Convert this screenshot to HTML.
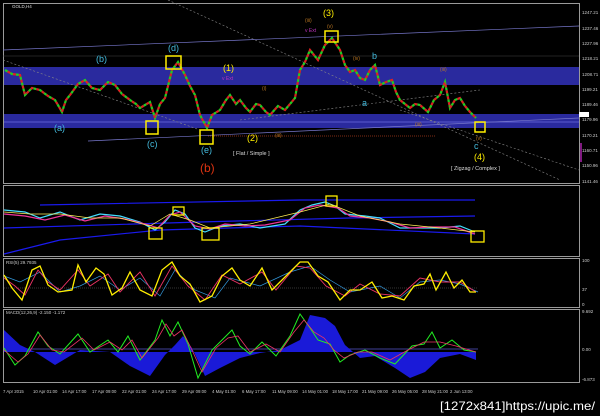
<!DOCTYPE html>
<html><head><meta charset="utf-8"><style>
html,body{margin:0;padding:0;background:#000;width:600px;height:416px;overflow:hidden}
svg{display:block}
text{font-family:"Liberation Sans",sans-serif}
</style></head><body>
<svg width="600" height="416" viewBox="0 0 600 416">
<rect width="600" height="416" fill="#000"/>
<g fill="none" stroke="#9a9a9a" stroke-width="1">
<rect x="3.5" y="3.5" width="576" height="180"/>
<rect x="3.5" y="185.5" width="576" height="71"/>
<rect x="3.5" y="258.5" width="576" height="49"/>
<rect x="3.5" y="309.5" width="576" height="73"/>
</g>
<rect x="4" y="67" width="575" height="18" fill="#2a2a9e"/>
<rect x="4" y="114" width="575" height="14" fill="#2a2a9e"/>
<line x1="4" y1="122" x2="579" y2="122" stroke="#8888ff" stroke-width="0.6"/>
<g stroke="#7777cc" stroke-width="0.7" fill="none">
<line x1="3" y1="50" x2="579" y2="26"/>
<line x1="88" y1="141" x2="579" y2="118"/>
</g>
<g stroke="#888" stroke-width="0.6" fill="none" stroke-dasharray="2,2">
<line x1="168" y1="0" x2="560" y2="180"/>
<line x1="3" y1="60" x2="200" y2="130"/>
<line x1="240" y1="120" x2="480" y2="90"/>
<line x1="400" y1="110" x2="579" y2="170"/>
</g>
<line x1="208" y1="136" x2="435" y2="136" stroke="#aa3a1a" stroke-width="0.8" stroke-dasharray="1,1"/>
<line x1="3" y1="56" x2="579" y2="56" stroke="#444" stroke-width="0.5"/>
<defs>
<polyline id="pr" fill="none" points="5,70 12,74 20,75 25,95 32,88 40,90 48,96 55,100 62,112 66,100 70,95 78,84 85,80 92,88 100,90 108,82 115,85 122,94 130,100 136,104 140,108 150,102 155,118 160,104 165,98 172,70 178,62 185,75 190,86 195,95 200,115 207,128 212,115 220,110 226,100 230,95 236,104 240,100 246,108 250,112 256,104 260,105 266,112 270,115 278,106 285,110 290,104 295,98 300,70 305,62 310,50 318,60 325,45 332,38 336,44 340,50 345,65 350,72 355,70 360,78 365,80 370,70 375,65 380,85 386,82 392,80 396,92 400,100 410,108 415,104 420,105 428,112 434,100 440,95 445,82 450,108 455,100 460,98 465,106 470,112 476,118"/>
</defs>
<use href="#pr" stroke="#22cc22" stroke-width="2.2" stroke-dasharray="3,3"/>
<use href="#pr" stroke="#dd2222" stroke-width="2.2" stroke-dasharray="3,3" stroke-dashoffset="3"/>
<g fill="none" stroke="#ffee00" stroke-width="1.5">
<rect x="166" y="56" width="15" height="13"/>
<rect x="146" y="121" width="12" height="13"/>
<rect x="200" y="130" width="13" height="14"/>
<rect x="325" y="31" width="13" height="11"/>
<rect x="475" y="122" width="10" height="10"/>
</g>
<g font-size="9">
<text x="54" y="131" fill="#44bbdd">(a)</text>
<text x="96" y="62" fill="#44bbdd">(b)</text>
<text x="147" y="147" fill="#44bbdd">(c)</text>
<text x="168" y="51" fill="#44bbdd">(d)</text>
<text x="201" y="153" fill="#44bbdd">(e)</text>
<text x="200" y="172" fill="#dd3311" font-size="12">(b)</text>
<text x="223" y="71" fill="#ffee00">(1)</text>
<text x="247" y="141" fill="#ffee00">(2)</text>
<text x="323" y="16" fill="#ffee00">(3)</text>
<text x="474" y="160" fill="#ffee00">(4)</text>
<text x="372" y="59" fill="#44bbdd">b</text>
<text x="362" y="106" fill="#44bbdd">a</text>
<text x="474" y="149" fill="#44bbdd">c</text>
</g>
<g font-size="5.5" fill="#ddd">
<text x="233" y="155">[ Flat / Simple ]</text>
<text x="451" y="170">[ Zigzag / Complex ]</text>
<text x="12" y="8" font-size="4.5">GOLD,H4</text>
</g>
<g font-size="5" fill="#bb7722">
<text x="305" y="22">(iii)</text><text x="327" y="28">(v)</text><text x="262" y="90">(i)</text><text x="275" y="137">(iii)</text><text x="353" y="60">(iv)</text><text x="440" y="71">(iii)</text><text x="415" y="126">(iii)</text><text x="476" y="140">(v)</text>
</g>
<g font-size="5" fill="#bb33bb"><text x="305" y="32">v Ext</text><text x="222" y="80">v Ext</text></g>
<g font-size="4.5" fill="#ccc">
<text x="582" y="14">1247.21</text><text x="582" y="30">1237.46</text><text x="582" y="45">1227.96</text><text x="582" y="60">1218.21</text><text x="582" y="76">1208.71</text><text x="582" y="91">1199.21</text><text x="582" y="106">1189.46</text><text x="582" y="121">1179.96</text><text x="582" y="137">1170.21</text><text x="582" y="152">1160.71</text><text x="582" y="167">1150.96</text><text x="582" y="183">1141.46</text>
<text x="582" y="262">100</text><text x="582" y="291">37</text><text x="582" y="306">0</text>
<text x="582" y="313">9.692</text><text x="582" y="351">0.00</text><text x="582" y="381">-6.873</text>
<text x="6" y="264">RSI(5) 29.7935</text><text x="6" y="314">MACD(12,26,9) -2.150 -1.172</text>
</g>
<rect x="579" y="112" width="10" height="5" fill="#fff"/>
<line x1="581" y1="143" x2="581" y2="162" stroke="#ff33ff" stroke-width="1"/>
<g fill="none" stroke-width="1.2">
<polyline stroke="#1a1aee" points="4,254 60,240 160,230 300,226 475,234"/>
<polyline stroke="#1a1aee" points="40,205 300,200 475,200"/>
<polyline stroke="#1a1aee" points="4,228 200,222 350,218 475,216"/>
<polyline stroke="#44ddff" points="4,210 25,212 40,218 60,212 80,220 100,214 120,216 140,222 155,230 165,222 175,210 185,214 195,228 205,232 220,226 240,224 260,228 285,224 300,210 312,205 325,202 335,206 345,214 365,216 380,218 400,228 420,228 440,228 460,226 475,232"/>
<polyline stroke="#ee3399" points="4,214 25,216 45,220 65,215 85,221 105,216 125,219 145,224 158,228 170,215 180,212 195,226 210,229 225,224 245,226 265,225 290,220 305,208 320,205 338,208 350,216 370,218 390,222 410,228 430,227 455,227 475,234"/>
<polyline stroke="#ffee55" stroke-width="0.7" points="4,212 30,214 60,214 90,218 120,218 150,226 170,214 190,220 210,228 250,224 300,212 330,204 360,216 400,224 440,228 475,232"/>
</g>
<g fill="none" stroke="#ffee00" stroke-width="1.3">
<rect x="149" y="228" width="13" height="11"/><rect x="173" y="207" width="11" height="8"/><rect x="202" y="228" width="17" height="12"/><rect x="326" y="196" width="11" height="10"/><rect x="471" y="231" width="13" height="11"/>
</g>
<line x1="4" y1="288" x2="478" y2="288" stroke="#666" stroke-width="0.5" stroke-dasharray="1,1"/>
<polyline fill="none" stroke="#3399dd" stroke-width="0.7" points="4,276 20,282 40,272 60,292 80,286 100,276 120,290 140,278 160,296 175,270 195,290 215,298 230,278 260,286 290,272 310,266 330,280 350,292 380,286 400,298 420,282 440,280 460,284 478,292"/>
<polyline fill="none" stroke="#ee3366" stroke-width="0.9" points="4,278 15,286 25,295 38,270 48,282 60,290 78,270 90,286 108,274 120,292 140,272 155,296 172,266 188,286 205,300 222,275 240,284 262,272 276,290 296,266 310,268 326,286 345,296 360,284 380,294 400,296 420,278 440,282 460,282 476,292"/>
<polyline fill="none" stroke="#ffee00" stroke-width="1.3" points="4,275 12,288 22,300 32,270 40,266 48,285 58,292 72,290 78,265 86,282 96,268 104,274 112,295 122,288 130,272 140,290 152,296 162,270 172,262 180,276 190,284 200,302 212,296 222,276 232,268 240,280 250,286 262,268 272,290 282,280 292,270 300,262 308,262 318,276 328,282 340,300 350,290 360,290 372,282 382,298 392,296 404,300 414,286 424,284 430,274 436,290 446,272 454,288 462,280 470,292 476,292"/>
<line x1="4" y1="349" x2="478" y2="349" stroke="#5555cc" stroke-width="0.8"/>
<path fill="#1a1ad8" d="M4,346 L4,330 20,345 35,352 55,365 80,350 110,352 130,366 150,376 165,355 175,345 183,336 192,348 205,376 220,368 240,358 260,353 280,350 300,340 310,315 325,318 335,326 345,345 360,358 375,356 395,368 410,378 425,372 440,358 460,354 476,360 476,352 L4,352 Z"/>
<polyline fill="none" stroke="#22ee22" stroke-width="1" points="4,348 15,365 25,356 38,332 48,346 60,354 78,334 90,352 108,340 118,352 128,336 140,360 155,340 162,320 170,336 178,322 188,344 198,378 212,350 222,340 232,330 240,346 250,354 262,342 276,356 290,336 300,314 310,328 318,340 330,344 340,362 350,355 365,350 380,358 395,364 412,346 424,344 432,332 440,348 452,340 464,350 476,352"/>
<polyline fill="none" stroke="#ee3366" stroke-width="0.8" points="4,350 18,362 28,354 40,335 52,350 64,352 82,338 94,350 110,342 122,350 132,340 142,358 158,338 166,324 174,336 182,330 192,350 202,372 216,348 228,338 238,336 250,352 266,344 280,352 294,332 304,320 314,332 324,338 334,350 344,358 358,352 372,352 390,360 408,350 424,342 440,342 456,346 476,352"/>
<g font-size="4.3" fill="#ccc">
<text x="3" y="393">7 Apr 2015</text><text x="33" y="393">10 Apr 01:00</text><text x="62" y="393">14 Apr 17:00</text><text x="92" y="393">17 Apr 09:00</text><text x="122" y="393">22 Apr 01:00</text><text x="152" y="393">24 Apr 17:00</text><text x="182" y="393">29 Apr 09:00</text><text x="212" y="393">4 May 01:00</text><text x="242" y="393">6 May 17:00</text><text x="272" y="393">11 May 09:00</text><text x="302" y="393">14 May 01:00</text><text x="332" y="393">18 May 17:00</text><text x="362" y="393">21 May 09:00</text><text x="392" y="393">26 May 05:00</text><text x="422" y="393">28 May 21:00</text><text x="450" y="393">2 Jun 13:00</text>
</g>
<text x="440" y="410" font-size="12" fill="#fff" font-family="Liberation Mono,monospace" textLength="155" lengthAdjust="spacingAndGlyphs">[1272x841]https://upic.me/</text>
</svg>
</body></html>
